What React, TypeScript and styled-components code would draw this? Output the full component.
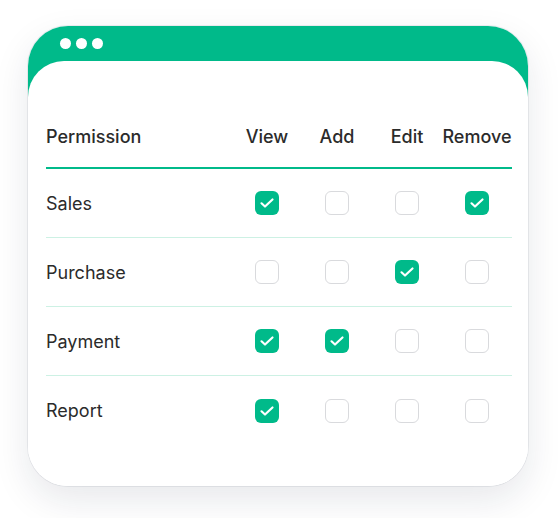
import React from "react";
import styled, { createGlobalStyle } from "styled-components";

const GlobalStyle = createGlobalStyle`
  html, body { margin: 0; padding: 0; background: #ffffff; }
  body { font-family: Inter, "Noto Sans", sans-serif; }
`;

const Page = styled.div`
  display: flex;
  align-items: flex-start;
  min-height: 518px;
  box-sizing: border-box;
  padding: 26px 0 32px 28px;
`;

const Window = styled.div`
  width: 500px;
  height: 460px;
  box-sizing: border-box;
  border-radius: 40px;
  background: linear-gradient(#00ba8a 0, #00ba8a 100px, #ffffff 100px);
  display: flex;
  flex-direction: column;
  overflow: hidden;
  box-shadow: 0 0 0 1px rgba(20, 30, 60, 0.07), 0 14px 36px rgba(20, 30, 60, 0.1);
`;

const TitleBar = styled.div`
  height: 35px;
  display: flex;
  align-items: center;
  gap: 5px;
  padding: 0 0 0 32px;
  box-sizing: border-box;
`;

const Dot = styled.span`
  width: 11px;
  height: 11px;
  border-radius: 50%;
  background: #ffffff;
`;

const Body = styled.div`
  flex: 1;
  background: #ffffff;
  border-radius: 36px 36px 0 0;
  padding: 64px 16px 0 18px;
`;

const Grid = styled.div`
  display: grid;
  grid-template-columns: 186px repeat(4, 70px);
`;

const HeaderRow = styled.div`
  display: contents;
`;

const HeadCell = styled.div<{ $left?: boolean }>`
  font-size: 18px;
  font-weight: 500;
  color: #2b2b2b;
  line-height: 24px;
  padding-bottom: 18px;
  border-bottom: 2px solid #00ba8a;
  text-align: ${(p) => (p.$left ? "left" : "center")};
  white-space: nowrap;
`;

const Cell = styled.div<{ $last?: boolean; $left?: boolean }>`
  height: 69px;
  box-sizing: border-box;
  display: flex;
  align-items: center;
  justify-content: ${(p) => (p.$left ? "flex-start" : "center")};
  border-bottom: ${(p) => (p.$last ? "none" : "1px solid #cdf1e4")};
  font-size: 18px;
  color: #2b2b2b;
`;

const Box = styled.span<{ $on: boolean }>`
  width: 24px;
  height: 24px;
  box-sizing: border-box;
  border-radius: 6px;
  display: flex;
  align-items: center;
  justify-content: center;
  background: ${(p) => (p.$on ? "#00ba8a" : "#ffffff")};
  border: ${(p) => (p.$on ? "none" : "1.5px solid #d9dadd")};
`;

const Check = () => (
  <svg width="16" height="16" viewBox="0 0 16 16" fill="none">
    <polyline
      points="2.5,8.3 6,11.5 13.5,4.5"
      stroke="#ffffff"
      strokeWidth="2.2"
      strokeLinecap="round"
      strokeLinejoin="round"
    />
  </svg>
);

const cols = ["View", "Add", "Edit", "Remove"];
const rows: { name: string; values: boolean[] }[] = [
  { name: "Sales", values: [true, false, false, true] },
  { name: "Purchase", values: [false, false, true, false] },
  { name: "Payment", values: [true, true, false, false] },
  { name: "Report", values: [true, false, false, false] },
];

export default function App() {
  return (
    <>
      <GlobalStyle />
      <Page>
        <Window>
          <TitleBar>
            <Dot />
            <Dot />
            <Dot />
          </TitleBar>
          <Body>
            <Grid>
              <HeaderRow>
                <HeadCell $left>Permission</HeadCell>
                {cols.map((c) => (
                  <HeadCell key={c}>{c}</HeadCell>
                ))}
              </HeaderRow>
              {rows.map((r, i) => (
                <React.Fragment key={r.name}>
                  <Cell $left $last={i === rows.length - 1}>
                    {r.name}
                  </Cell>
                  {r.values.map((v, j) => (
                    <Cell key={j} $last={i === rows.length - 1}>
                      <Box $on={v}>{v && <Check />}</Box>
                    </Cell>
                  ))}
                </React.Fragment>
              ))}
            </Grid>
          </Body>
        </Window>
      </Page>
    </>
  );
}
